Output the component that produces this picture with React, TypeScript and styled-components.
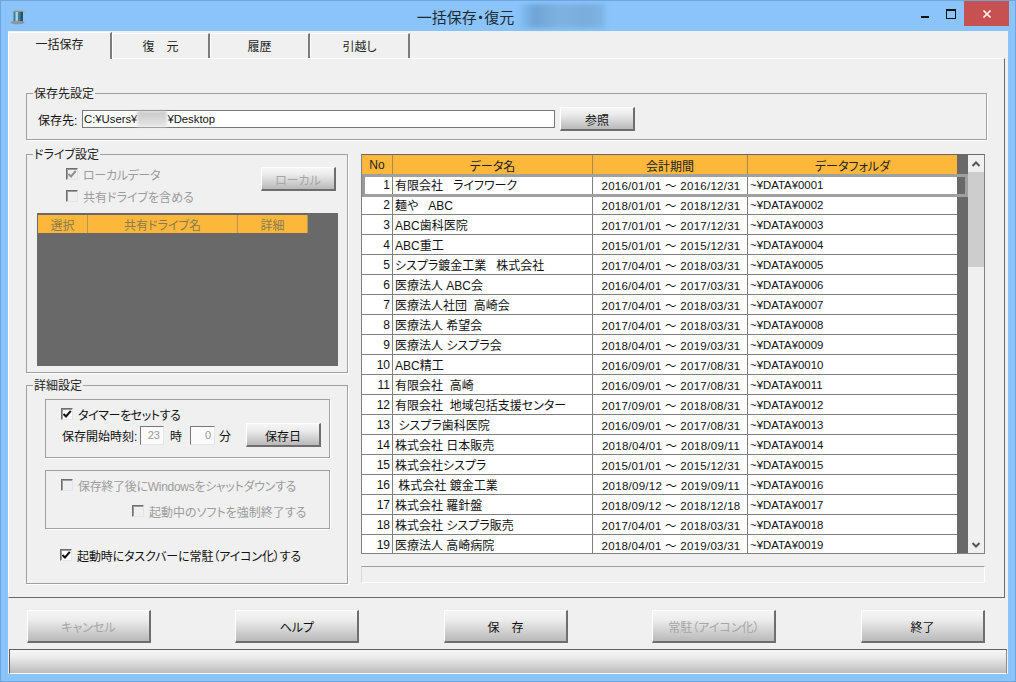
import React from "react";
import styled, { createGlobalStyle } from "styled-components";

const Global = createGlobalStyle`
  html, body { margin: 0; padding: 0; background: #8ac4fb; }
  * { box-sizing: border-box; }
  body { font-family: "Liberation Sans", "Noto Sans CJK JP", sans-serif; font-size: 12px; color: #111; }
`;

const Win = styled.div`
  width: 1016px; height: 682px; background: #8ac4fb; border: 1px solid #6fa6dd; overflow: hidden;
  display: flex; flex-direction: column; font-feature-settings: "palt";
`;
const TitleBar = styled.div`
  height: 30px; flex: none; display: grid; grid-template-columns: 32px 1fr 110px; align-items: start;
`;
const TitleIcon = styled.div` padding: 8px 0 0 9px; line-height: 0; `;
const TitleText = styled.div`
  display: flex; align-items: center; justify-content: center; height: 30px; gap: 3px; padding-left: 84px;
  font-size: 15px; color: #1c2a38; white-space: nowrap;
`;
const BlurBlock = styled.span`
  width: 88px; height: 24px; filter: blur(2px);
  background: linear-gradient(90deg, #8ac4fb 0%, #6fa5d6 20%, #7fb2e0 50%, #7aaddb 80%, #7fb5e6 100%);
`;
const WinButtons = styled.div` display: flex; justify-content: flex-end; height: 26px; margin-right: 6px; `;
const WinBtn = styled.div`
  width: 26px; height: 25px; flex: none; display: flex; align-items: center; justify-content: center; line-height: 0;
`;
const CloseBtn = styled.div`
  width: 45px; height: 25px; flex: none; background: #c75050; color: #fff; display: flex; align-items: center; justify-content: center; line-height: 0;
`;

const Client = styled.div`
  flex: none; height: 643px; margin: 0 7px; background: #f0f0f0; display: flex; flex-direction: column;
`;
const Tabs = styled.div`
  height: 27px; flex: none; display: flex; padding-left: 0; align-items: flex-end;
`;
const Tab = styled.div<{ $w: number; $active?: boolean }>`
  width: ${(p) => p.$w}px; height: ${(p) => (p.$active ? 27 : 25)}px; display: flex; align-items: center; justify-content: center;
  font-size: 12px; color: #222; background: #f0f0f0;
  border-top: 1px solid #fff; border-left: 1px solid #fff; border-right: 2px solid #7c7c7c;
  padding-bottom: ${(p) => (p.$active ? 5 : 1)}px;
  position: relative;
  z-index: ${(p) => (p.$active ? 1 : 0)};
  margin-bottom: ${(p) => (p.$active ? -1 : 0)}px;
`;
const Panel = styled.div`
  height: 540px; flex: none; border-top: 1px solid #fff; border-left: 1px solid #fff; border-right: 1px solid #696969; border-bottom: 1px solid #696969;
  margin-right: 3px; padding: 27px 0 0 17px; display: flex; flex-direction: column;
`;
const Group = styled.fieldset<{ $w: number; $h: number }>`
  width: ${(p) => p.$w}px; height: ${(p) => p.$h}px; margin: 0; padding: 0; flex: none; min-width: 0;
  border: 1px solid #a0a0a0; box-shadow: 1px 1px 0 #fff; 
`;
const Legend = styled.legend`
  margin-left: 6px; padding: 2px 1px 0; height: 14px; font-size: 12px; line-height: 12px; color: #222;
`;
const PathRow = styled.div`
  display: flex; align-items: center; padding: 7px 0 0 11px; 
`;
const PathLabel = styled.span` width: 44px; flex: none; white-space: nowrap; `;
const PathInput = styled.div`
  width: 473px; height: 18px; background: #fff; border: 1px solid #777; display: flex; align-items: center; padding-left: 1px;
  font-size: 11.3px; white-space: nowrap; margin-right: 5px;
`;
const Smudge = styled.span`
  display: inline-block; width: 30px; height: 16px; background: linear-gradient(180deg, #c8c8c8, #e6e6e6); filter: blur(1.5px);
`;
const Btn = styled.button<{ $w: number; $h: number; $off?: boolean }>`
  width: ${(p) => p.$w}px; height: ${(p) => p.$h}px; flex: none; padding: 1px 0 0; margin: 0; font: inherit; font-size: 12px;
  font-feature-settings: "palt";
  color: ${(p) => (p.$off ? "#a6a6a6" : "#111")};
  background: linear-gradient(180deg, #f6f6f6 0%, #ececec 30%, #b9b9b9 100%);
  border: none; border-top: 1px solid #fff; border-left: 1px solid #fff; border-right: 2px solid #6e6e6e; border-bottom: 2px solid #6e6e6e;
`;
const Columns = styled.div` display: grid; grid-template-columns: 322px 624px; column-gap: 13px; margin-top: 7px; `;
const LeftCol = styled.div` display: flex; flex-direction: column; gap: 5px; `;
const RightCol = styled.div` padding-top: 7px; display: flex; flex-direction: column; gap: 12px; `;
const DriveTop = styled.div` height: 52px; display: flex; padding: 6px 0 0 39px; `;
const Checks = styled.div` width: 195px; flex: none; display: flex; flex-direction: column; gap: 8px; `;
const CheckRow = styled.div<{ $off?: boolean; $indent?: number; $mt?: number; $tight?: number }>`
  display: flex; align-items: center; gap: 5px; height: 14px; white-space: nowrap;
  margin-left: ${(p) => p.$indent ?? 0}px;
  margin-top: ${(p) => p.$mt ?? 0}px;
  letter-spacing: ${(p) => p.$tight ?? 0}px;
  color: ${(p) => (p.$off ? "#9c9c9c" : "#111")};
`;
const Box = styled.span<{ $off?: boolean }>`
  width: 12px; height: 12px; flex: none; background: ${(p) => (p.$off ? "#efefef" : "#fff")};
  border-top: 1px solid #6e6e6e; border-left: 1px solid #6e6e6e; border-right: 1px solid #e4e4e4; border-bottom: 1px solid #e4e4e4;
  box-shadow: inset 1px 1px 0 #9c9c9c; display: flex; align-items: center; justify-content: center; line-height: 0;
`;
const DriveGrid = styled.div`
  margin-left: 10px; width: 301px; height: 153px; background: #696969; padding-top: 2px;
`;
const DriveHead = styled.div`
  display: grid; grid-template-columns: 50px 150px 70px; width: 270px; margin-left: 1px; height: 18px; background: #fdb83c;
`;
const DriveHeadCell = styled.div`
  display: flex; align-items: center; justify-content: center; color: #8b7a52; border-right: 1px solid #b4975c; 
`;
const DetailBody = styled.div` padding: 7px 0 0 18px; display: flex; flex-direction: column; `;
const SubBox = styled.div<{ $mt?: number }>`
  width: 285px; height: 59px; border: 1px solid #a0a0a0; box-shadow: 1px 1px 0 #fff; margin-top: ${(p) => p.$mt ?? 0}px;
  padding: 7px 0 0 15px; display: flex; flex-direction: column;
`;
const TimeRow = styled.div` display: flex; align-items: center; margin-top: 2px; height: 24px; white-space: nowrap; `;
const TimeInput = styled.span<{ $w: number }>`
  width: ${(p) => p.$w}px; height: 19px; flex: none; background: #fbfbfb; color: #9a9a9a; font-size: 11px; text-align: right; padding-right: 3px;
  border-top: 1px solid #777; border-left: 1px solid #777; border-right: 1px solid #e6e6e6; border-bottom: 1px solid #e6e6e6; line-height: 16px;
`;
const TimeLabel = styled.span<{ $w: number; $pl?: number }>`
  width: ${(p) => p.$w}px; flex: none; padding-left: ${(p) => p.$pl ?? 0}px;
`;
const BottomCheck = styled.div` margin: 19px 0 0 15px; `;

const GridWrap = styled.div`
  width: 624px; height: 400px; border: 1px solid #808080; border-top: 1px solid #696969; background: #696969; display: flex; overflow: hidden;
`;
const TableBody = styled.div` width: 606px; flex: none; position: relative; `;
const HeadRow = styled.div`
  display: grid; grid-template-columns: 30px 200px 155px 210px; height: 20px; width: 595px; background: #fdb83c;
`;
const HeadCell = styled.div`
  display: flex; align-items: center; justify-content: center; color: #222; border-left: 1px solid #a88a50; font-size: 12px;
  &:first-child { border-left: 0; }
`;
const Row = styled.div`
  display: grid; grid-template-columns: 30px 200px 155px 210px; height: 20px; background: #fff; 
  box-shadow: inset 0 -1px 0 #808080; width: 595px;
`;
const SelFrame = styled.div`
  position: absolute; left: 0; top: 19px; width: 606px; height: 23px; border: 3px solid #a0a0a0; border-left-color: #9a9a9a; pointer-events: none;
`;
const Cell = styled.div<{ $num?: boolean; $date?: boolean; $mono?: boolean }>`
  display: flex; align-items: center; white-space: pre; overflow: hidden; border-left: 1px solid #808080;
  justify-content: ${(p) => (p.$num ? "flex-end" : p.$date ? "center" : "flex-start")};
  padding: ${(p) => (p.$num ? "0 2px 1px 0" : "0 0 1px 2px")};
  font-size: 12px; color: #111;
  ${(p) => (p.$num ? "border-left: 0;" : "")}
  ${(p) => (p.$date ? "font-size: 11.5px; letter-spacing: 0.26px;" : "")}
  ${(p) => (p.$mono ? "font-size: 11.4px;" : "")}
`;
const Scroll = styled.div`
  width: 16px; flex: none; margin-left: auto; background: #f0f0f0; display: flex; flex-direction: column; 
`;
const ScrollArrow = styled.div`
  height: 17px; flex: none; display: flex; align-items: center; justify-content: center; line-height: 0;
`;
const Thumb = styled.div` height: 95px; flex: none; background: #cdcdcd; `;
const ScrollTrack = styled.div` flex: 1; `;
const Progress = styled.div`
  width: 624px; height: 17px; background: #f0f0f0; border-top: 1px solid #a0a0a0; border-left: 1px solid #d8d8d8; border-right: 1px solid #fff; border-bottom: 1px solid #fff;
`;
const Footer = styled.div`
  height: 51px; flex: none; display: flex; justify-content: space-between; padding: 12px 23.1px 0 18.9px;
`;
const Status = styled.div`
  height: 25px; flex: none; margin: 0 0 0 1px; width: 998px; 
  border-top: 1px solid #5e5e5e; border-left: 1px solid #5e5e5e; border-right: 1px solid #8c8c8c; border-bottom: 1px solid #fff;
  background: linear-gradient(180deg, #f6f6f6 0%, #ececec 30%, #bcbcbc 100%);
`;

const Tick = ({ off }: { off?: boolean }) => (
  <svg width="10" height="10" viewBox="0 0 10 10">
    <path d="M1.5 5 L4 7.5 L8.8 1.8" fill="none" stroke={off ? "#8f8f8f" : "#111"} strokeWidth="2" />
  </svg>
);

const Spool = () => (
  <svg width="16" height="16" viewBox="0 0 16 16">
    <ellipse cx="8.5" cy="2.5" rx="7" ry="1.8" fill="#a9b3b5" />
    <rect x="3.5" y="2.5" width="9.5" height="10.5" fill="#3f7f9c" />
    <rect x="5.5" y="3" width="2.5" height="10" fill="#a8d2de" />
    <rect x="10.5" y="3" width="2.5" height="10" fill="#2c5468" />
    <ellipse cx="7.5" cy="13.5" rx="7" ry="1.8" fill="#8b989c" />
  </svg>
);

const rows: [string, string, string][] = [
  ["有限会社   ライフワーク", "2016/01/01", "2016/12/31"],
  ["麺や   ABC", "2018/01/01", "2018/12/31"],
  ["ABC歯科医院", "2017/01/01", "2017/12/31"],
  ["ABC重工", "2015/01/01", "2015/12/31"],
  ["シスプラ鍍金工業   株式会社", "2017/04/01", "2018/03/31"],
  ["医療法人 ABC会", "2016/04/01", "2017/03/31"],
  ["医療法人社団  高崎会", "2017/04/01", "2018/03/31"],
  ["医療法人 希望会", "2017/04/01", "2018/03/31"],
  ["医療法人 シスプラ会", "2018/04/01", "2019/03/31"],
  ["ABC精工", "2016/09/01", "2017/08/31"],
  ["有限会社  高崎", "2016/09/01", "2017/08/31"],
  ["有限会社  地域包括支援センター", "2017/09/01", "2018/08/31"],
  [" シスプラ歯科医院", "2016/09/01", "2017/08/31"],
  ["株式会社 日本販売", "2018/04/01", "2018/09/11"],
  ["株式会社シスプラ", "2015/01/01", "2015/12/31"],
  [" 株式会社 鍍金工業", "2018/09/12", "2019/09/11"],
  ["株式会社 羅針盤", "2018/09/12", "2018/12/18"],
  ["株式会社 シスプラ販売", "2017/04/01", "2018/03/31"],
  ["医療法人 高崎病院", "2018/04/01", "2019/03/31"],
];

export default function App() {
  return (
    <Win>
      <Global />
      <TitleBar>
        <TitleIcon><Spool /></TitleIcon>
        <TitleText>一括保存・復元<BlurBlock /></TitleText>
        <WinButtons>
          <WinBtn><svg width="10" height="10" viewBox="0 0 10 10"><rect x="1" y="7" width="8" height="2" fill="#111" /></svg></WinBtn>
          <WinBtn><svg width="10" height="10" viewBox="0 0 10 10"><rect x="0.5" y="0.5" width="9" height="9" fill="none" stroke="#111" /><rect x="0" y="0" width="10" height="2" fill="#111" /></svg></WinBtn>
          <CloseBtn><svg width="10" height="10" viewBox="0 0 10 10"><path d="M1.5 1.5 L8.5 8.5 M8.5 1.5 L1.5 8.5" stroke="#fff" strokeWidth="1.6" /></svg></CloseBtn>
        </WinButtons>
      </TitleBar>
      <Client>
        <Tabs>
          <Tab $w={104} $active>一括保存</Tab>
          <Tab $w={98}>復　元</Tab>
          <Tab $w={100}>履歴</Tab>
          <Tab $w={100}>引越し</Tab>
        </Tabs>
        <Panel>
          <Group $w={961} $h={54}>
            <Legend>保存先設定</Legend>
            <PathRow>
              <PathLabel>保存先:</PathLabel>
              <PathInput>C:¥Users¥<Smudge />¥Desktop</PathInput>
              <Btn $w={75} $h={24}>参照</Btn>
            </PathRow>
          </Group>
          <Columns>
            <LeftCol>
              <Group $w={322} $h={226}>
                <Legend>ドライブ設定</Legend>
                <DriveTop>
                  <Checks>
                    <CheckRow $off $tight={-0.3}><Box $off><Tick off /></Box>ローカルデータ</CheckRow>
                    <CheckRow $off><Box $off />共有ドライブを含める</CheckRow>
                  </Checks>
                  <Btn $w={75} $h={24} $off>ローカル</Btn>
                </DriveTop>
                <DriveGrid>
                  <DriveHead>
                    <DriveHeadCell>選択</DriveHeadCell>
                    <DriveHeadCell>共有ドライブ名</DriveHeadCell>
                    <DriveHeadCell>詳細</DriveHeadCell>
                  </DriveHead>
                </DriveGrid>
              </Group>
              <Group $w={322} $h={206}>
                <Legend>詳細設定</Legend>
                <DetailBody>
                  <SubBox>
                    <CheckRow $tight={-0.4}><Box><Tick /></Box>タイマーをセットする</CheckRow>
                    <TimeRow>
                      <TimeLabel $w={79} $pl={1}>保存開始時刻:</TimeLabel>
                      <TimeInput $w={24}>23</TimeInput>
                      <TimeLabel $w={26} $pl={6}>時</TimeLabel>
                      <TimeInput $w={25}>0</TimeInput>
                      <TimeLabel $w={31} $pl={4}>分</TimeLabel>
                      <Btn $w={75} $h={24}>保存日</Btn>
                    </TimeRow>
                  </SubBox>
                  <SubBox $mt={12}>
                    <CheckRow $off $tight={-0.3}><Box $off />保存終了後にWindowsをシャットダウンする</CheckRow>
                    <CheckRow $off $indent={71} $mt={12}><Box $off />起動中のソフトを強制終了する</CheckRow>
                  </SubBox>
                  <BottomCheck>
                    <CheckRow $tight={-0.12}><Box><Tick /></Box>起動時にタスクバーに常駐（アイコン化）する</CheckRow>
                  </BottomCheck>
                </DetailBody>
              </Group>
            </LeftCol>
            <RightCol>
              <GridWrap>
                <TableBody>
                  <HeadRow>
                    <HeadCell>No</HeadCell>
                    <HeadCell>データ名</HeadCell>
                    <HeadCell>会計期間</HeadCell>
                    <HeadCell>データフォルダ</HeadCell>
                  </HeadRow>
                  {rows.map(([name, from, to], i) => (
                    <Row key={i}>
                      <Cell $num>{i + 1}</Cell>
                      <Cell>{name}</Cell>
                      <Cell $date>{from} ～ {to}</Cell>
                      <Cell $mono>~¥DATA¥{String(i + 1).padStart(4, "0")}</Cell>
                    </Row>
                  ))}
                  <SelFrame />
                </TableBody>
                <Scroll>
                  <ScrollArrow><svg width="10" height="8" viewBox="0 0 10 8"><path d="M1.5 6 L5 2.5 L8.5 6" fill="none" stroke="#555" strokeWidth="2" /></svg></ScrollArrow>
                  <Thumb />
                  <ScrollTrack />
                  <ScrollArrow><svg width="10" height="8" viewBox="0 0 10 8"><path d="M1.5 2 L5 5.5 L8.5 2" fill="none" stroke="#555" strokeWidth="2" /></svg></ScrollArrow>
                </Scroll>
              </GridWrap>
              <Progress />
            </RightCol>
          </Columns>
        </Panel>
        <Footer>
          <Btn $w={124} $h={33} $off>キャンセル</Btn>
          <Btn $w={124} $h={33}>ヘルプ</Btn>
          <Btn $w={124} $h={33}>保　存</Btn>
          <Btn $w={124} $h={33} $off>常駐（アイコン化）</Btn>
          <Btn $w={124} $h={33}>終了</Btn>
        </Footer>
        <Status />
      </Client>
    </Win>
  );
}
